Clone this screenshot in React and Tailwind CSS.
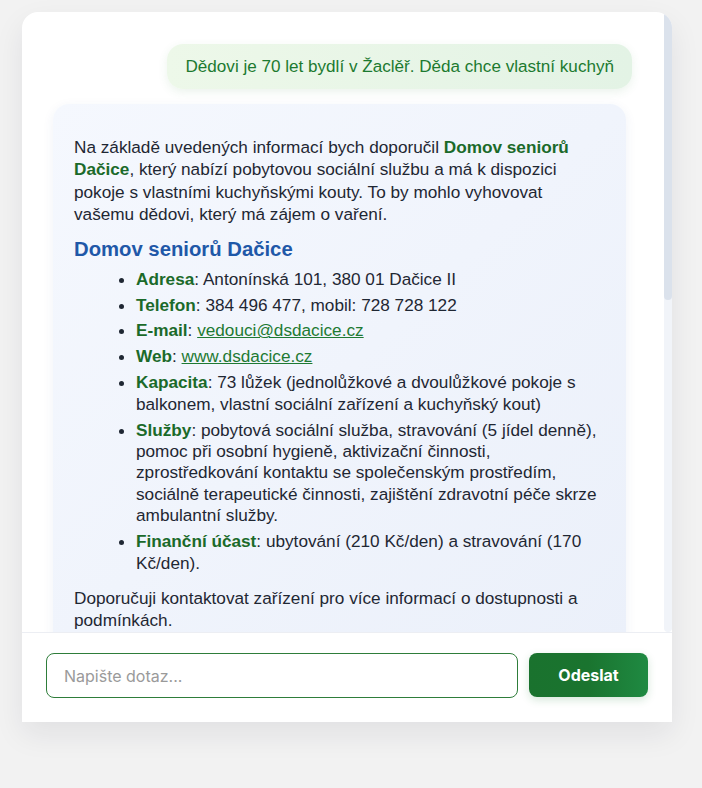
import { useState } from 'react';

function UserBubble({ text }) {
  return (
    <div className="flex justify-end pr-[32px]">
      <div className="rounded-2xl bg-gradient-to-r from-[#edf8e9] to-[#e3f3e5] px-[18px] py-[12px] text-[17.1px] leading-[21px] text-[#1c7a30] shadow-[0_3px_10px_rgba(60,140,70,0.10)]">
        {text}
      </div>
    </div>
  );
}

function BotBubble() {
  return (
    <div className="ml-[31px] w-[573px] rounded-2xl bg-gradient-to-br from-[#f5f8fe] to-[#ebf0fa] px-[21px] pt-[16px] pb-[20px] text-[17.2px] leading-[22.4px] text-[#1f2733] shadow-[0_3px_12px_rgba(40,70,140,0.07)]">
      <p className="mt-4">
        Na základě uvedených informací bych doporučil <strong className="text-[#1b6a2a]">Domov seniorů Dačice</strong>, který nabízí pobytovou sociální službu a má k dispozici pokoje s vlastními kuchyňskými kouty. To by mohlo vyhovovat vašemu dědovi, který má zájem o vaření.
      </p>
      <h3 className="mt-[10px] text-[20.3px] font-bold leading-[26px] text-[#1f58a8]">Domov seniorů Dačice</h3>
      <ul className="mt-[7px] ml-[22px] list-disc pl-10 leading-[21.4px] marker:text-[#1f2733]">
        <li className="mb-[4.5px]"><strong className="text-[#1b6a2a]">Adresa</strong>: Antonínská 101, 380 01 Dačice II</li>
        <li className="mb-[4.5px]"><strong className="text-[#1b6a2a]">Telefon</strong>: 384 496 477, mobil: 728 728 122</li>
        <li className="mb-[4.5px]"><strong className="text-[#1b6a2a]">E-mail</strong>: <a href="#" className="text-[#1e7a33] underline">vedouci@dsdacice.cz</a></li>
        <li className="mb-[4.5px]"><strong className="text-[#1b6a2a]">Web</strong>: <a href="#" className="text-[#1e7a33] underline">www.dsdacice.cz</a></li>
        <li className="mb-[4.5px]"><strong className="text-[#1b6a2a]">Kapacita</strong>: 73 lůžek (jednolůžkové a dvoulůžkové pokoje s balkonem, vlastní sociální zařízení a kuchyňský kout)</li>
        <li className="mb-[4.5px]"><strong className="text-[#1b6a2a]">Služby</strong>: pobytová sociální služba, stravování (5 jídel denně), pomoc při osobní hygieně, aktivizační činnosti, zprostředkování kontaktu se společenským prostředím, sociálně terapeutické činnosti, zajištění zdravotní péče skrze ambulantní služby.</li>
        <li className="mb-[4.5px]"><strong className="text-[#1b6a2a]">Finanční účast</strong>: ubytování (210 Kč/den) a stravování (170 Kč/den).</li>
      </ul>
      <p className="mt-[13px]">
        Doporučuji kontaktovat zařízení pro více informací o dostupnosti a podmínkách.
      </p>
    </div>
  );
}

export default function App() {
  const [query, setQuery] = useState('');

  return (
    <div className="min-h-screen bg-[#f2f2f2] pt-3 pl-[22px]" style={{ fontFamily: '"Liberation Sans", Arial, sans-serif' }}>
      <div className="flex h-[710px] w-[650px] flex-col overflow-hidden rounded-t-2xl bg-white shadow-[0_12px_30px_rgba(20,30,50,0.08)]">
        <div className="flex min-h-0 flex-1">
          <div className="min-w-0 flex-1 overflow-hidden pt-[32px]">
            <div className="flex flex-col gap-[15px]">
              <UserBubble text="Dědovi je 70 let bydlí v Žaclěř. Děda chce vlastní kuchyň" />
              <BotBubble />
            </div>
          </div>
          {/* scrollbar */}
          <div className="w-2 rounded-full bg-[#f1f4f9]">
            <div className="h-[288px] rounded-full bg-[#dbe2ec]" />
          </div>
        </div>
        <div className="flex gap-[11px] border-t border-[#eceef3] px-6 pt-5 pb-[24px]">
          <input
            autoFocus
            value={query}
            onChange={e => setQuery(e.target.value)}
            placeholder="Napište dotaz..."
            className="h-[45px] flex-1 rounded-lg border border-[#2e7d3a] px-[17px] text-[16px] text-[#222] caret-[#1a6fe8] outline-none placeholder:text-[#9a9a9a]"
            style={{ fontFamily: 'Inter, "Liberation Sans", sans-serif' }}
          />
          <button
            className="h-[44px] w-[119px] rounded-lg bg-gradient-to-r from-[#1a722e] via-[#1a742f] to-[#1f8a42] text-[16px] font-bold text-white shadow-[0_3px_8px_rgba(30,120,50,0.18)]"
            style={{ fontFamily: 'Inter, "Liberation Sans", sans-serif' }}
          >
            Odeslat
          </button>
        </div>
      </div>
    </div>
  );
}
